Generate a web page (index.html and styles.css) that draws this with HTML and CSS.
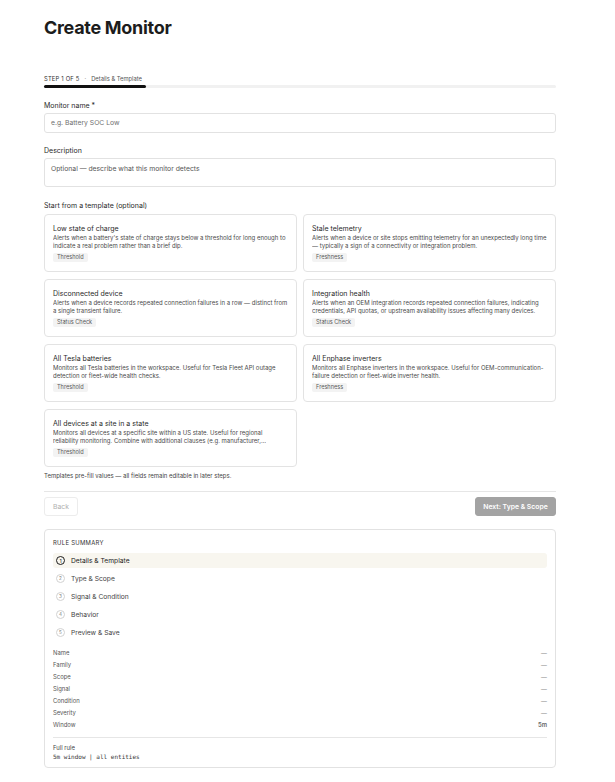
FILE: index.html
```html
<!DOCTYPE html>
<html>
<head>
<meta charset="utf-8">
<link rel="stylesheet" href="styles.css">
</head>
<body>
<main class="page">
  <h1 class="title">Create Monitor</h1>

  <div class="stepper">
    <div class="step-label"><span class="step-count">STEP 1 OF 5</span><span class="step-dot">·</span><span class="step-name">Details &amp; Template</span></div>
    <div class="progress"><div class="progress-fill"></div></div>
  </div>

  <div class="field">
    <label class="label">Monitor name *</label>
    <div class="input">e.g. Battery SOC Low</div>
  </div>

  <div class="field">
    <label class="label">Description</label>
    <div class="input textarea">Optional — describe what this monitor detects</div>
  </div>

  <div class="label templates-label">Start from a template (optional)</div>
  <div class="templates">
    <div class="card">
      <div class="card-title">Low state of charge</div>
      <div class="card-desc">Alerts when a battery's state of charge stays below a threshold for long enough to indicate a real problem rather than a brief dip.</div>
      <span class="tag">Threshold</span>
    </div>
    <div class="card">
      <div class="card-title">Stale telemetry</div>
      <div class="card-desc">Alerts when a device or site stops emitting telemetry for an unexpectedly long time — typically a sign of a connectivity or integration problem.</div>
      <span class="tag">Freshness</span>
    </div>
    <div class="card">
      <div class="card-title">Disconnected device</div>
      <div class="card-desc">Alerts when a device records repeated connection failures in a row — distinct from a single transient failure.</div>
      <span class="tag">Status Check</span>
    </div>
    <div class="card">
      <div class="card-title">Integration health</div>
      <div class="card-desc">Alerts when an OEM integration records repeated connection failures, indicating credentials, API quotas, or upstream availability issues affecting many devices.</div>
      <span class="tag">Status Check</span>
    </div>
    <div class="card">
      <div class="card-title">All Tesla batteries</div>
      <div class="card-desc">Monitors all Tesla batteries in the workspace. Useful for Tesla Fleet API outage detection or fleet-wide health checks.</div>
      <span class="tag">Threshold</span>
    </div>
    <div class="card">
      <div class="card-title">All Enphase inverters</div>
      <div class="card-desc">Monitors all Enphase inverters in the workspace. Useful for OEM-communication-failure detection or fleet-wide inverter health.</div>
      <span class="tag">Freshness</span>
    </div>
    <div class="card">
      <div class="card-title">All devices at a site in a state</div>
      <div class="card-desc">Monitors all devices at a specific site within a US state. Useful for regional<br>reliability monitoring. Combine with additional clauses (e.g. manufacturer,…</div>
      <span class="tag">Threshold</span>
    </div>
  </div>
  <p class="hint">Templates pre-fill values — all fields remain editable in later steps.</p>

  <div class="actions">
    <button class="btn btn-back">Back</button>
    <button class="btn btn-next">Next: Type &amp; Scope</button>
  </div>

  <section class="summary">
    <div class="summary-title">RULE SUMMARY</div>
    <ol class="steps">
      <li class="step active"><span class="num">1</span>Details &amp; Template</li>
      <li class="step"><span class="num">2</span>Type &amp; Scope</li>
      <li class="step"><span class="num">3</span>Signal &amp; Condition</li>
      <li class="step"><span class="num">4</span>Behavior</li>
      <li class="step"><span class="num">5</span>Preview &amp; Save</li>
    </ol>
    <dl class="props">
      <div class="prop"><dt>Name</dt><dd class="dash">—</dd></div>
      <div class="prop"><dt>Family</dt><dd class="dash">—</dd></div>
      <div class="prop"><dt>Scope</dt><dd class="dash">—</dd></div>
      <div class="prop"><dt>Signal</dt><dd class="dash">—</dd></div>
      <div class="prop"><dt>Condition</dt><dd class="dash">—</dd></div>
      <div class="prop"><dt>Severity</dt><dd class="dash">—</dd></div>
      <div class="prop"><dt>Window</dt><dd class="val">5m</dd></div>
    </dl>
    <div class="full-rule">
      <div class="full-label">Full rule</div>
      <div class="full-code">5m window | all entities</div>
    </div>
  </section>
</main>
</body>
</html>
```

FILE: styles.css
```css
* { box-sizing: border-box; }
html, body { margin: 0; padding: 0; background: #fff; }
body {
  font-family: Inter, "Noto Sans", sans-serif;
  color: #1f1f1f;
}
.page {
  width: 512px;
  margin-left: 44px;
  padding-top: 16px;
}
.title {
  margin: 0;
  font-size: 18px;
  line-height: 24px;
  font-weight: 700;
  letter-spacing: -0.3px;
  color: #1c1c1c;
}
.stepper { margin-top: 35px; }
.step-label {
  font-size: 5.8px;
  line-height: 8px;
  color: #333;
  display: flex;
  align-items: center;
}
.step-count { letter-spacing: 0.2px; }
.step-dot { margin: 0 5px; color: #888; }
.step-name { color: #555; }
.progress {
  margin-top: 2px;
  height: 3px;
  background: #f1f1f1;
  border-radius: 2px;
}
.progress-fill {
  width: 20%;
  height: 3px;
  background: #111;
  border-radius: 2px;
}
.field { margin-top: 13px; }
.field + .field { margin-top: 13px; }
.label {
  display: block;
  font-size: 7px;
  line-height: 9px;
  color: #2a2a2a;
}
.input {
  margin-top: 3px;
  height: 20px;
  border: 1px solid #e2e2e2;
  border-radius: 3px;
  font-size: 6.8px;
  line-height: 18px;
  padding: 0 6px;
  color: #707070;
}
.textarea {
  height: 29px;
  line-height: 9px;
  padding-top: 5px;
  color: #555;
}
.templates-label { margin-top: 14px; }
.templates {
  margin-top: 4px;
  display: grid;
  grid-template-columns: 1fr 1fr;
  column-gap: 6px;
  row-gap: 7px;
}
.card {
  height: 58px;
  border: 1px solid #e3e3e3;
  border-radius: 4px;
  padding: 9px 8px 0 8px;
  display: flex;
  flex-direction: column;
  align-items: flex-start;
}
.card-title {
  font-size: 7px;
  line-height: 10px;
  color: #2a2a2a;
}
.card-desc {
  font-size: 6px;
  line-height: 8.3px;
  color: #4a4a4a;
  height: 16.6px;
  overflow: hidden;
}
.tag {
  display: block;
  margin-top: 2px;
  font-size: 5.6px;
  line-height: 9px;
  padding: 0 4px;
  background: #f3f3f3;
  border-radius: 2px;
  color: #5a5a5a;
}
.hint {
  margin: 5px 0 0;
  font-size: 6px;
  line-height: 8px;
  color: #444;
}
.actions {
  margin-top: 11px;
  border-top: 1px solid #e6e6e6;
  padding-top: 5px;
  display: flex;
  justify-content: space-between;
  align-items: center;
}
.btn {
  font-family: inherit;
  height: 19px;
  border-radius: 3px;
  font-size: 6.8px;
  padding: 0;
}
.btn-back {
  width: 34px;
  background: #fff;
  border: 1px solid #ececec;
  color: #b0b0b0;
}
.btn-next {
  width: 81px;
  background: #a3a3a3;
  border: 1px solid #a3a3a3;
  color: #fff;
  font-weight: 600;
}
.summary {
  margin-top: 13px;
  border: 1px solid #e2e2e2;
  border-radius: 4px;
  padding: 9px 8px 6px;
}
.summary-title {
  font-size: 5.9px;
  line-height: 8px;
  letter-spacing: 0.3px;
  color: #333;
}
.steps {
  list-style: none;
  margin: 6px 0 0;
  padding: 0;
}
.step {
  height: 15px;
  display: flex;
  align-items: center;
  padding-left: 3px;
  font-size: 6.7px;
  color: #444;
  border-radius: 3px;
}
.step + .step { margin-top: 3px; }
.step.active { background: #f8f6ef; color: #1c1c1c; }
.num {
  width: 9px;
  height: 9px;
  border-radius: 50%;
  border: 1px solid #d2d2d2;
  font-size: 4.6px;
  display: inline-flex;
  align-items: center;
  justify-content: center;
  margin-right: 6px;
  color: #777;
}
.active .num {
  border-color: #1c1c1c;
  color: #1c1c1c;
  font-size: 5.4px;
}
.props { margin: 7px 0 0; padding: 0; }
.prop {
  display: flex;
  justify-content: space-between;
  height: 12px;
  align-items: center;
  font-size: 5.9px;
  line-height: 8px;
}
.prop dt { color: #555; }
.prop dd { margin: 0; }
.dash { color: #888; }
.val { color: #666; font-weight: 600; }
.full-rule {
  margin-top: 6px;
  border-top: 1px solid #e6e6e6;
  padding-top: 5px;
}
.full-label { font-size: 5.9px; line-height: 9px; color: #444; }
.full-code {
  font-family: "DejaVu Sans Mono", "Liberation Mono", monospace;
  font-size: 6px;
  line-height: 9px;
  color: #333;
}
```
